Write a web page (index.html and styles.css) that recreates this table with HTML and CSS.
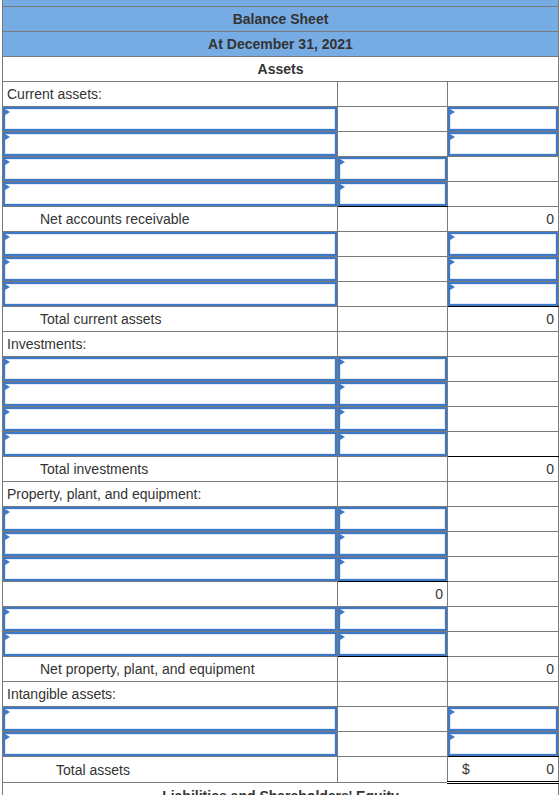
FILE: index.html
```html
<!DOCTYPE html>
<html lang="en">
<head>
    <meta charset="UTF-8">
    <meta name="viewport" content="width=device-width, initial-scale=1.0">
    <title>Balance Sheet</title>
    <link rel="stylesheet" href="styles.css">
</head>
<body>
    <div class="sheet">
        <table class="balance">
            <colgroup>
                <col class="col-label">
                <col class="col-mid">
                <col class="col-total">
            </colgroup>
            <tr class="head"><td colspan="3"></td></tr>
            <tr class="head"><td colspan="3">Balance Sheet</td></tr>
            <tr class="head"><td colspan="3">At December 31, 2021</td></tr>
            <tr class="section"><td colspan="3">Assets</td></tr>

            <tr><td class="label">Current assets:</td><td></td><td></td></tr>
            <tr><td class="in"><div class="field"></div></td><td></td><td class="in"><div class="field"></div></td></tr>
            <tr><td class="in"><div class="field"></div></td><td></td><td class="in"><div class="field"></div></td></tr>
            <tr><td class="in"><div class="field"></div></td><td class="in"><div class="field"></div></td><td></td></tr>
            <tr><td class="in"><div class="field"></div></td><td class="in rule"><div class="field"></div></td><td></td></tr>
            <tr><td class="label sub">Net accounts receivable</td><td></td><td class="num">0</td></tr>
            <tr><td class="in"><div class="field"></div></td><td></td><td class="in"><div class="field"></div></td></tr>
            <tr><td class="in"><div class="field"></div></td><td></td><td class="in"><div class="field"></div></td></tr>
            <tr><td class="in"><div class="field"></div></td><td></td><td class="in rule"><div class="field"></div></td></tr>
            <tr><td class="label sub">Total current assets</td><td></td><td class="num">0</td></tr>

            <tr><td class="label">Investments:</td><td></td><td></td></tr>
            <tr><td class="in"><div class="field"></div></td><td class="in"><div class="field"></div></td><td></td></tr>
            <tr><td class="in"><div class="field"></div></td><td class="in"><div class="field"></div></td><td></td></tr>
            <tr><td class="in"><div class="field"></div></td><td class="in"><div class="field"></div></td><td></td></tr>
            <tr><td class="in"><div class="field"></div></td><td class="in"><div class="field"></div></td><td class="rule"></td></tr>
            <tr><td class="label sub">Total investments</td><td></td><td class="num">0</td></tr>

            <tr><td class="label">Property, plant, and equipment:</td><td></td><td></td></tr>
            <tr><td class="in"><div class="field"></div></td><td class="in"><div class="field"></div></td><td></td></tr>
            <tr><td class="in"><div class="field"></div></td><td class="in"><div class="field"></div></td><td></td></tr>
            <tr><td class="in"><div class="field"></div></td><td class="in rule"><div class="field"></div></td><td></td></tr>
            <tr><td></td><td class="num">0</td><td></td></tr>
            <tr><td class="in"><div class="field"></div></td><td class="in"><div class="field"></div></td><td></td></tr>
            <tr><td class="in"><div class="field"></div></td><td class="in rule"><div class="field"></div></td><td></td></tr>
            <tr><td class="label sub">Net property, plant, and equipment</td><td></td><td class="num">0</td></tr>

            <tr><td class="label">Intangible assets:</td><td></td><td></td></tr>
            <tr><td class="in"><div class="field"></div></td><td></td><td class="in"><div class="field"></div></td></tr>
            <tr><td class="in"><div class="field"></div></td><td></td><td class="in rule"><div class="field"></div></td></tr>
            <tr><td class="label grand">Total assets</td><td></td><td class="num money"><span>$</span><span>0</span></td></tr>

            <tr class="section"><td colspan="3">Liabilities and Shareholders' Equity</td></tr>
        </table>
    </div>
</body>
</html>
```

FILE: styles.css
```css
body {
    margin: 0;
    padding: 0;
    background: white;
    font-family: "Liberation Sans", Arial, sans-serif;
    font-size: 14px;
    color: #333;
}
.sheet {
    height: 795px;
    overflow: hidden;
}
.balance {
    margin: -19px 0 0 2px;
    width: 556px;
    border-collapse: collapse;
    table-layout: fixed;
}
.col-label {
    width: 335px;
}
.col-mid {
    width: 110px;
}
.col-total {
    width: 111px;
}
.balance td {
    border: 1px solid #7a7a7a;
    padding: 0 4px;
    height: 24px;
    line-height: 24px;
    white-space: nowrap;
}
.head td {
    background: #77abe4;
    text-align: center;
    font-weight: bold;
}
.section td {
    text-align: center;
    font-weight: bold;
}
.label.sub {
    padding-left: 37px;
}
.label.grand {
    padding-left: 53px;
}
.num {
    text-align: right;
    padding-right: 6px;
}
.money span:first-child {
    float: left;
    padding-left: 10px;
}
.balance td.money {
    border-top-color: #000;
    border-bottom: 3px double #000;
}
.balance td.rule {
    border-bottom-color: #000;
}
.balance td.in {
    padding: 0;
}
.field {
    position: relative;
    height: 24px;
    box-sizing: border-box;
    border: 2px solid #3f79c6;
    box-shadow: inset 0 0 0 1px #dfe9f7;
    background: white;
}
.field::before {
    content: "";
    position: absolute;
    top: 0;
    left: 0;
    border-top: 3px solid transparent;
    border-bottom: 3px solid transparent;
    border-left: 5px solid #3f79c6;
}
```
